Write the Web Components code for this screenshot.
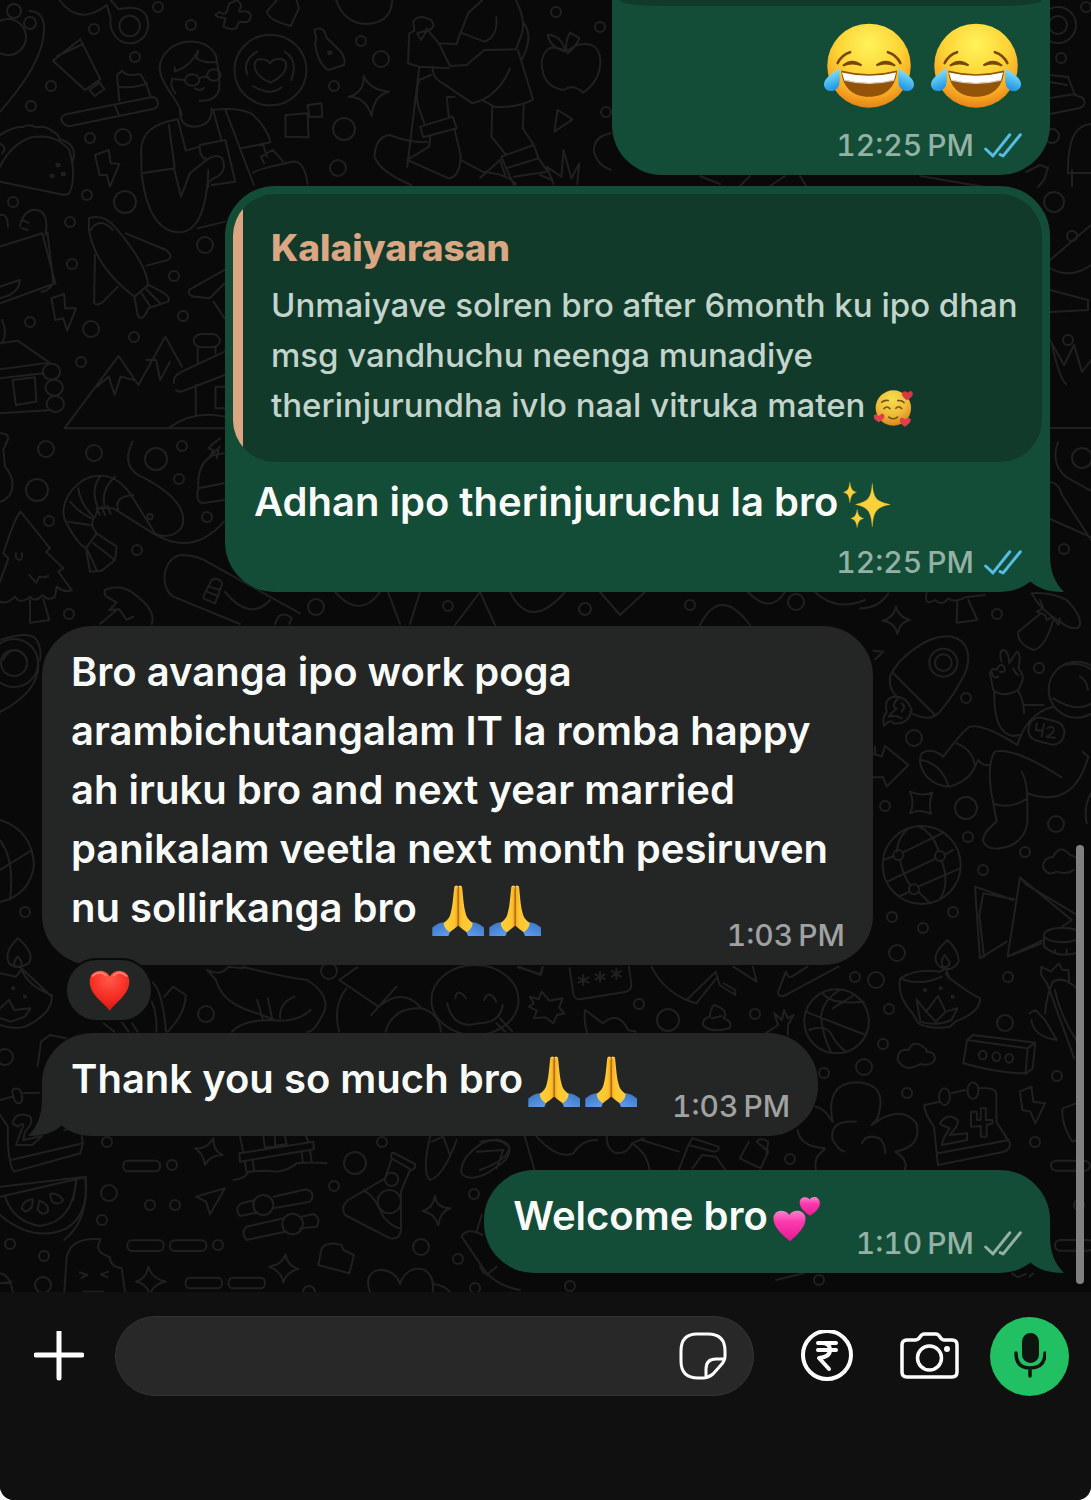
<!DOCTYPE html>
<html lang="en">
<head>
    <meta charset="utf-8">
    <meta name="viewport" content="width=device-width, initial-scale=1">
    <title>Chat</title>
    <style>
        body {
            margin: 0;
            background: #fff;
            font-family: Inter, "Liberation Sans", sans-serif;
            font-weight: 500;
        }
    </style>
</head>
<body>
    <chat-app>
        <chat-message side="out" time="12:25 PM" status="read" class="first">
            <chat-quote slot="quote" class="tail-end"></chat-quote>
            <chat-emoji name="joy" size="large"></chat-emoji><chat-emoji name="joy" size="large"></chat-emoji>
        </chat-message>
        <chat-message side="out" time="12:25 PM" status="read" tail class="close quoted">
            <chat-quote slot="quote" author="Kalaiyarasan">Unmaiyave solren bro after 6month ku ipo dhan msg vandhuchu neenga munadiye therinjurundha ivlo naal vitruka maten <chat-emoji name="loving" size="small"></chat-emoji></chat-quote>
            Adhan ipo therinjuruchu la bro<chat-emoji name="sparkles"></chat-emoji>
        </chat-message>
        <chat-message side="in" time="1:03 PM" class="long">
            Bro avanga ipo work poga arambichutangalam IT la romba happy ah iruku bro and next year married panikalam veetla next month pesiruven nu sollirkanga bro <chat-emoji name="pray"></chat-emoji><chat-emoji name="pray"></chat-emoji>
            <chat-emoji slot="reaction" name="heart"></chat-emoji>
        </chat-message>
        <chat-message side="in" time="1:03 PM" tail class="close">
            Thank you so much bro<chat-emoji name="pray"></chat-emoji><chat-emoji name="pray"></chat-emoji>
        </chat-message>
        <chat-message side="out" time="1:10 PM" status="sent" tail>
            Welcome bro<chat-emoji name="hearts"></chat-emoji>
        </chat-message>
        <chat-composer slot="composer"></chat-composer>
    </chat-app>

    <script>
        const EMOJI = {
            joy: ['😂', '33 38 282 262', `
                <defs>
                    <radialGradient id="face" cx=".5" cy=".25" r=".78"><stop offset="0" stop-color="#fff35c"/><stop offset=".5" stop-color="#fdd334"/><stop offset=".8" stop-color="#f7a523"/><stop offset="1" stop-color="#df7d10"/></radialGradient>
                    <linearGradient id="tear" x2=".3" y2="1"><stop offset="0" stop-color="#c9f3fb"/><stop offset=".5" stop-color="#62c9f3"/><stop offset="1" stop-color="#2398e8"/></linearGradient>
                </defs>
                <circle cx="174" cy="168" r="128" fill="url(#face)"/>
                <g fill="none" stroke="#7a4608" stroke-width="8" stroke-linecap="round">
                    <path d="M78 160q12-25 38-33M270 160q-12-25-38-33"/>
                    <path d="M94 168q28-24 57-1q-29-11-57 1zM197 167q29-23 57 1q-28-12-57-1z" fill="#7a4608" stroke-width="6"/>
                </g>
                <path d="M89 183Q174 205 260 183C257 232 226 263 174 263S92 232 89 183z" fill="#935409"/>
                <path d="M91 189Q174 209 257 189L251 212Q174 231 98 212z" fill="#fff"/>
                <path d="M98 212Q174 232 251 212" fill="none" stroke="#dbcdbc" stroke-width="4"/>
                <path id="drop" d="M85 174C67 188 34 205 36 227C39 250 73 253 82 228C87 208 82 190 85 174z" fill="url(#tear)"/>
                <use href="#drop" transform="matrix(-1 0 0 1 348 0)"/>`],
            loving: ['🥰', '38 42 124 118', `
                <defs><radialGradient id="love" cx=".45" cy=".25" r=".75"><stop offset="0" stop-color="#f5df4d"/><stop offset=".6" stop-color="#eebb39"/><stop offset="1" stop-color="#d9861e"/></radialGradient></defs>
                <circle cx="98" cy="101" r="55" fill="url(#love)"/>
                <g fill="none" stroke="#75501b" stroke-width="5" stroke-linecap="round"><path d="M62 83q9-8 20-5M112 78q12-2 19 6M69 103q9-10 18 0M106 102q9-10 18 1M84 129q13 11 27 0"/></g>
                <path fill="#d93843" d="M140 77Q119 62 127 51Q137 45 142 54Q153 43 158 54Q162 65 140 77z"/>
                <path fill="#e0404c" d="M53 145Q35 137 37 125Q43 117 53 126Q64 111 70 124Q73 135 53 145zM133 159Q114 146 119 134Q126 127 134 136Q146 126 152 137Q153 147 133 159z"/>`],
            sparkles: ['✨', '211 355 146 139', `
                <g fill="#fbd03a" stroke="#e9b72b" stroke-width="1">
                    <path d="M300 359C304 402 309 414 355 423C309 431 304 447 300 491C296 447 290 431 249 423C290 414 296 402 300 359z"/>
                    <path d="M232 356C235 377 239 382 252 386C239 390 235 396 232 418C229 396 226 390 212 386C226 382 229 377 232 356z"/>
                    <path d="M254 438C257 456 261 461 274 465C261 469 257 474 254 493C251 474 247 469 235 465C247 461 251 456 254 438z"/>
                </g>`],
            pray: ['🙏', '31 37 156 155', `
                <defs>
                    <linearGradient id="skin" x1="0" x2="1"><stop offset="0" stop-color="#ffcf3a"/><stop offset=".75" stop-color="#ffc52f"/><stop offset="1" stop-color="#f0a21f"/></linearGradient>
                    <linearGradient id="cuff" x2=".7" y2="1"><stop offset="0" stop-color="#3b72bd"/><stop offset="1" stop-color="#5b9bee"/></linearGradient>
                    <g id="arm">
                        <path d="M32 189V164Q48 149 67 148L88 170L80 189z" fill="url(#cuff)"/>
                        <path d="M98 42Q105 36 109 41V158C104 164 93 172 84 178Q67 167 66 150C78 142 85 132 87 121C94 96 95 65 98 42z" fill="url(#skin)"/>
                        <path d="M99 44q5-5 8 0l-1-4h-5z" fill="#fff3c4"/>
                    </g>
                </defs>
                <use href="#arm"/><use href="#arm" transform="matrix(-1 0 0 1 219 0)"/>
                <path d="M109 48V158" stroke="#a8690f" stroke-width="3"/>`],
            hearts: ['💕', '753 753 124 146', `
                <defs><linearGradient id="pink" x2="0" y2="1"><stop offset="0" stop-color="#ff83ce"/><stop offset=".35" stop-color="#fb3bae"/><stop offset="1" stop-color="#ea1896"/></linearGradient></defs>
                <path fill="url(#pink)" d="M797 897C777 876 754 853 754 823C755 796 784 792 795 813C806 791 836 797 837 823C838 853 815 876 797 897z"/>
                <path fill="url(#pink)" d="M848 816C836 805 822 793 822 774C822 754 841 752 848 764C855 751 873 755 874 774C875 791 860 806 848 816z"/>`],
            heart: ['❤️', '246 270 116 124', `
                <defs><radialGradient id="red" cx=".5" cy=".2" r=".8"><stop offset="0" stop-color="#ff5a49"/><stop offset=".5" stop-color="#f83429"/><stop offset="1" stop-color="#d91512"/></radialGradient></defs>
                <path fill="url(#red)" d="M305 393C284 365 248 345 248 304C248 268 292 262 305 290C318 262 360 268 360 304C360 345 324 365 305 393z"/>
                <path d="M256 288q18-19 38-2M316 286q18-17 36 2" stroke="#ff9388" stroke-width="6" fill="none" stroke-linecap="round" opacity=".7"/>`]
        };

        class ChatEmoji extends HTMLElement {
            connectedCallback() {
                const [glyph, box, art] = EMOJI[this.getAttribute('name')];
                this.attachShadow({ mode: 'open' }).innerHTML = `
                    <style>
                        :host {
                            display: inline-block;
                            width: 52px;
                            height: 52px;
                            margin: -8px 0 -8px 5px;
                            vertical-align: middle;
                        }

                        :host([name="sparkles"]),
                        :host([name="hearts"]) {
                            width: 48px;
                            height: 46px;
                        }

                        :host([size="small"]) {
                            width: 40px;
                            height: 38px;
                            margin-left: 0;
                        }

                        :host([size="large"]) {
                            width: 92px;
                            height: 86px;
                            margin: 0 0 0 15px;
                        }

                        :host([name="heart"]) {
                            width: 41px;
                            height: 41px;
                            margin: 0;
                        }

                        svg {
                            display: block;
                            width: 100%;
                            height: 100%;
                        }
                    </style>
                    <svg viewBox="${box}" preserveAspectRatio="none" role="img" aria-label="${glyph}">${art}</svg>
                `;
            }
        }

        class ChatQuote extends HTMLElement {
            connectedCallback() {
                const author = this.getAttribute('author');
                this.attachShadow({ mode: 'open' }).innerHTML = `
                    <style>
                        :host {
                            display: block;
                            box-sizing: border-box;
                            margin: 8px 8px 0;
                            padding: 29px 16px 32px 38px;
                            border-radius: 42px;
                            background: linear-gradient(to right, #dba683 10px, #113a2a 10px);
                            color: #c2d4cb;
                            font-size: 33px;
                            line-height: 50px;
                        }

                        /* Only the lower edge of this quote is scrolled into view */
                        :host(.tail-end) {
                            height: 6px;
                            margin-top: 0;
                            padding: 0;
                            border-radius: 0 0 42px 42px / 0 0 6px 6px;
                            background: #113a2a;
                        }

                        strong {
                            display: block;
                            margin-bottom: 7px;
                            color: #dba683;
                            font-size: 37px;
                            font-weight: 800;
                        }
                    </style>
                    ${author ? `<strong>${author}</strong>` : ''}
                    <slot></slot>
                `;
            }
        }

        class ChatMessage extends HTMLElement {
            connectedCallback() {
                const status = this.getAttribute('status');
                // iOS puts a narrow no-break space before AM and PM
                const time = this.getAttribute('time').replace(' ', '\u202f');
                this.attachShadow({ mode: 'open' }).innerHTML = `
                    <style>
                        :host {
                            --bubble: #242626;
                            --meta: #a0a2a1;
                            display: flex;
                            flex-direction: column;
                            align-items: flex-start;
                            margin-top: 34px;
                        }

                        :host([side="out"]) {
                            --bubble: #144d37;
                            --meta: #93b1a4;
                            align-items: flex-end;
                        }

                        :host(.close) {
                            margin-top: 11px;
                        }

                        :host(.first) {
                            margin-top: 0;
                        }

                        .bubble {
                            position: relative;
                            box-sizing: border-box;
                            max-width: min(831px, 100%);
                            border-radius: 50px;
                            background: var(--bubble);
                            color: #fafcfb;
                        }

                        :host(.first) .bubble {
                            min-width: 438px;
                            border-radius: 0 0 50px 50px;
                        }

                        :host(.quoted) .bubble {
                            max-width: min(825px, 100%);
                        }

                        .content {
                            display: flex;
                            align-items: flex-end;
                            gap: 35px;
                            padding: 16px 28px 12px 29px;
                        }

                        .text {
                            margin-bottom: 16px;
                            font-size: 40px;
                            font-weight: 600;
                            line-height: 59px;
                        }

                        .meta {
                            display: flex;
                            align-items: center;
                            gap: 10px;
                            color: var(--meta);
                            font-size: 30px;
                            font-variant-numeric: tabular-nums;
                            line-height: 36px;
                            white-space: nowrap;
                        }

                        :host(.first) .content,
                        :host(.quoted) .content {
                            flex-direction: column;
                            gap: 0;
                            padding-top: 10px;
                        }

                        :host(.quoted) .text {
                            align-self: flex-start;
                            margin-bottom: 13px;
                        }

                        :host(.first) .text {
                            display: flex;
                            margin: 7px 0 18px;
                        }

                        /* The time shares the last line of a wrapped text */
                        :host(.long) .content {
                            display: grid;
                        }

                        :host(.long) .text,
                        :host(.long) .meta {
                            grid-area: 1 / 1;
                        }

                        :host(.long) .meta {
                            place-self: end;
                        }

                        .ticks {
                            width: 38px;
                            height: 25px;
                            fill: none;
                            stroke: currentColor;
                            stroke-width: 9;
                            stroke-linecap: round;
                            stroke-linejoin: round;
                        }

                        .ticks.read {
                            color: #53bde3;
                        }

                        .tail {
                            position: absolute;
                            right: -14px;
                            bottom: 0;
                            width: 44px;
                            height: 52px;
                            fill: var(--bubble);
                        }

                        :host([side="in"]) .tail {
                            right: auto;
                            left: -14px;
                            transform: scaleX(-1);
                        }

                        .reaction {
                            position: relative;
                            display: flex;
                            align-items: center;
                            justify-content: center;
                            width: 84px;
                            height: 60px;
                            margin: -7px 0 0 23px;
                            border: 2px solid #090a0a;
                            border-radius: 32px;
                            background: #242626;
                        }

                        .reaction[hidden] {
                            display: none;
                        }
                    </style>
                    <div class="bubble">
                        <slot name="quote"></slot>
                        <div class="content">
                            <div class="text"><slot></slot></div>
                            <div class="meta">
                                <time>${time}</time>
                                ${status ? `<svg class="ticks ${status}" viewBox="611 564 115 75" role="img" aria-label="${status}"><path d="M616 612l22 21 51-64M660 629l9 4 52-64"/></svg>` : ''}
                            </div>
                        </div>
                        ${this.hasAttribute('tail') ? '<svg class="tail" viewBox="0 0 44 52" aria-hidden="true"><path d="M30 0V15C30 32 35 43 44 52C30 52 19 49 11 42L0 15z"/></svg>' : ''}
                    </div>
                    <div class="reaction" ${this.querySelector('[slot="reaction"]') ? '' : 'hidden'}><slot name="reaction"></slot></div>
                `;
            }
        }

        // Loose dots between the doodles: x, y, radius
        const DOTS = [
            [158, 7, 5], [94, 29, 5], [191, 25, 5], [135, 57, 5], [51, 86, 5], [31, 106, 5], [90, 138, 5], [123, 137, 8],
            [361, 41, 5], [381, 59, 8], [334, 86, 5], [344, 129, 11], [338, 168, 8], [13, 202, 5], [87, 195, 5], [125, 202, 11],
            [70, 222, 5], [205, 245, 8], [72, 264, 5], [174, 276, 5], [183, 316, 5], [30, 322, 5], [91, 329, 8], [134, 337, 5],
            [81, 362, 5], [556, 12, 5], [600, 27, 5], [46, 449, 8], [94, 453, 8], [182, 446, 5], [156, 459, 11], [14, 11, 7],
            [30, 23, 6], [8, 37, 18], [606, 112, 5], [37, 490, 11], [49, 521, 5], [179, 479, 5], [207, 517, 5], [137, 550, 5],
            [69, 614, 5], [997, 614, 5], [1039, 668, 5], [966, 698, 5], [914, 738, 8], [885, 806, 5], [966, 808, 11], [968, 837, 5],
            [1056, 824, 8], [1025, 852, 5], [983, 870, 5], [953, 912, 5], [892, 917, 5], [923, 928, 5], [897, 953, 8], [876, 980, 8],
            [1008, 977, 5], [25, 912, 5], [206, 1014, 8], [329, 971, 8], [107, 1142, 5], [382, 1142, 5], [355, 1163, 11], [172, 1165, 5],
            [109, 1193, 8], [150, 1205, 5], [175, 1205, 5], [102, 1220, 5], [10, 1244, 5], [44, 1256, 5], [43, 1285, 8], [334, 1186, 5],
            [474, 1194, 5], [421, 1247, 8], [458, 1259, 5], [475, 1288, 5], [218, 1245, 5], [309, 1292, 6], [639, 1004, 5], [668, 1020, 11],
            [755, 1014, 5], [1005, 1023, 8], [889, 1009, 5], [855, 977, 5], [883, 1044, 5], [864, 1067, 8], [824, 1073, 5],
            [907, 1093, 5], [1057, 1076, 5], [1035, 1142, 5], [790, 1159, 5], [1079, 1205, 5], [1061, 58, 5], [1086, 7, 5], [1052, 136, 7],
            [1054, 202, 10], [1072, 236, 5], [1068, 340, 5], [1082, 458, 10], [1064, 549, 5], [796, 602, 8], [316, 607, 8], [448, 606, 5], [585, 609, 6],
            [690, 605, 5], [5, 1057, 8], [570, 1286, 5], [819, 1280, 5]
        ];

        class ChatWallpaper extends HTMLElement {
            connectedCallback() {
                const dots = DOTS.map(([x, y, r]) => `<circle cx="${x}" cy="${y}" r="${r}"/>`).join('');
                this.attachShadow({ mode: 'open' }).innerHTML = `
                    <style>
                        :host {
                            position: absolute;
                            inset: 0;
                            overflow: hidden;
                            background: #090909;
                        }

                        svg {
                            display: block;
                            width: 100%;
                            height: 100%;
                            fill: none;
                            stroke: #202020;
                            stroke-width: 2;
                            stroke-linecap: round;
                            stroke-linejoin: round;
                        }

                        path,
                        circle,
                        ellipse,
                        rect {
                            vector-effect: non-scaling-stroke;
                        }
                    </style>
                    <svg viewBox="0 0 1091 1292" preserveAspectRatio="xMinYMin slice" aria-hidden="true">
                        ${dots}
                        <!-- Toothpaste, reader, coffee, hiker, taco, plane, cabin, mountains -->
                        <g transform="scale(.3954 .3333)">
                            <path d="M75 33Q115 35 111 95Q108 190 0 335M150 0Q200 80 270 15L280 55C275 90 295 128 325 130C360 130 378 98 374 65C370 20 330 18 300 28L280 0"/>
                            <ellipse cx="328" cy="78" rx="26" ry="31"/>
                            <path d="M203 118L134 182L215 270L254 238zM145 168L210 132M226 270L252 248L264 267L240 288z"/>
                            <path d="M170 342L385 291Q402 294 399 316Q398 323 386 327L175 379Q157 374 155 357Q156 346 170 342M290 315L300 343M302 302L296 225L309 212Q320 232 355 222Q375 260 380 290M300 260Q338 266 372 250"/>
                            <path d="M460 345C460 310 405 255 404 205C405 160 440 122 490 125C530 128 548 160 549 185Q520 192 497 175Q500 160 501 152Q485 197 442 215V202M549 185Q557 240 554 270Q545 305 505 302M436 235Q428 260 444 280M455 330Q454 380 492 380Q538 376 535 325M442 238L468 240M505 235Q515 228 525 232"/>
                            <ellipse cx="486" cy="240" rx="18" ry="17"/><ellipse cx="541" cy="225" rx="17" ry="17"/><path d="M493 265Q505 275 516 264"/>
                            <path d="M450 358Q355 375 357 455L358 520Q375 690 450 697Q520 700 527 510M427 375L442 505L359 520M450 360L470 452L505 440M505 435L570 420L595 545L535 555M505 440Q505 475 525 478Q545 460 562 475Q575 510 550 530Q520 545 527 560M525 478L480 520L458 590L440 505M540 335L560 420M570 330L642 555M535 330Q600 320 635 340Q675 380 684 427L610 445M665 432L675 470M640 520Q640 510 740 485Q770 482 778 552M500 685L570 665M668 490L660 470L690 450L716 484"/>
                            <ellipse cx="684" cy="210" rx="91" ry="106"/><path d="M684 248Q640 225 644 190Q650 170 676 182L683 190L690 180Q720 170 724 192Q724 225 684 248M625 222Q613 180 650 155M720 155Q755 180 737 240M640 258Q685 290 712 262"/>
                            <path d="M545 45L555 35Q570 50 575 30L580 10L600 0L610 15L605 35Q630 30 634 45Q635 60 625 66L605 65L597 85Q580 90 565 80L570 55L550 50zM700 0L675 35Q678 60 735 78L756 25L750 0M850 0Q870 70 925 72Q990 70 992 0"/>
                            <path d="M800 115L795 90Q820 75 825 112L862 155Q876 180 870 195L830 210Q803 190 797 130zM920 228Q935 270 984 275Q945 285 940 348Q925 290 882 290Q920 280 920 228M722 345L778 340L780 412L722 410zM778 315L813 310L815 350L782 350z"/>
                            <circle cx="834" cy="158" r="4"/>
                            <path d="M1220 0L1185 38L1165 98L1225 125Q1260 110 1255 50M1305 0Q1330 60 1320 100L1305 148L1225 150M1165 95L1155 132L1110 130L1078 85M1110 130L1138 198L1180 195L1225 150M1035 100L1048 92L1045 65Q1060 40 1090 60Q1105 80 1085 90L1055 100L1065 120L1080 90M1035 100L1032 190L1060 200L1135 205M1095 200Q1090 230 1120 250L1195 310Q1260 290 1290 205M1310 150L1348 298Q1310 325 1250 320L1222 302M1325 70Q1350 110 1320 178M1060 205L1030 500M1060 240Q1050 280 1058 320L1073 370M1090 225L1060 240M1150 290L1130 292L1135 350M1063 380L1145 350L1155 385L1070 412zM1150 390L1165 465Q1165 530 1135 535L1030 480L1085 440L1088 412M1080 425Q1040 430 985 405Q950 410 947 470Q960 515 1040 555M1245 320L1243 410L1280 465M1325 315L1322 385L1350 435M1268 470L1350 435L1362 475L1280 505zM1280 505L1300 555M1362 475L1385 515L1300 530M1165 480L1220 515Q1280 520 1305 552M1400 552L1382 500L1420 530L1425 450L1445 535L1465 490L1460 552"/>
                            <path d="M1430 155Q1380 120 1370 185Q1370 260 1425 270Q1450 250 1475 278Q1520 240 1518 180Q1515 120 1460 135zM1430 155Q1420 105 1385 105Q1390 140 1430 155M1432 150Q1430 120 1442 98L1466 115Q1450 150 1435 160M1410 330L1448 358L1402 395zM1545 400Q1500 410 1502 455Q1510 495 1545 510"/>
                            <path d="M0 500Q30 430 80 412Q140 400 175 450Q195 530 175 580Q165 588 150 582L0 545M0 405Q30 380 60 380Q75 370 90 382Q115 375 135 395Q150 405 150 418Q190 430 187 470L182 490M0 430Q20 445 5 460M240 465L275 450L280 490L302 492L278 560L270 525L252 525z"/>
                            <circle cx="147" cy="495" r="4"/><circle cx="132" cy="528" r="4"/><circle cx="160" cy="522" r="4"/>
                            <path d="M0 740L107 700L140 850L0 910M120 698L135 850Q120 875 105 875M0 645Q20 640 20 680M50 680Q60 625 95 630Q125 640 115 705M55 660L72 668M55 685L70 690M0 860L50 840Q50 880 0 895"/>
                            <path d="M225 655Q260 640 290 680Q370 790 375 855L340 890Q240 800 225 690zM230 690Q240 665 262 670Q280 680 285 690M318 700L420 750Q440 770 425 780L370 797M240 765L238 910Q245 918 258 908L298 860M340 890L348 945Q360 970 375 925L425 905Q435 890 400 870L375 855M358 880L380 920M370 868L405 910"/>
                            <path d="M130 895L162 882L165 925L192 925L170 992L160 955L140 960zM0 1030L45 1022L125 1088L0 1108M5 1030Q20 1000 5 960M0 1135L110 1120M0 1240L130 1230M32 1140L88 1132L92 1205L40 1215z"/>
                            <ellipse cx="130" cy="1115" rx="22" ry="24"/><ellipse cx="137" cy="1163" rx="22" ry="24"/><ellipse cx="140" cy="1212" rx="22" ry="24"/>
                            <path d="M163 1285L300 1068L350 1155L418 1010L460 1100M245 1160L275 1130L290 1185L305 1130L340 1140M370 1080L395 1080L405 1140L430 1085M163 1285H568M428 1283Q490 1230 568 1250M440 1150Q435 1130 460 1115L568 1055M445 1170Q455 1180 470 1170L568 1125M495 1155V1245M500 1045V1090M545 1042V1060M568 1160H545V1225H568M568 810L478 870Q475 890 495 890L530 895L568 850M540 905L568 955"/>
                            <rect x="490" y="1002" width="66" height="40" rx="20"/>
                        </g>
                        <!-- Shrimp, tree, bobble hat, mushroom, snowboard -->
                        <g transform="translate(0 400) scale(.3333)">
                            <path d="M398 125C370 180 385 215 435 235C500 270 550 310 550 360C550 400 500 420 465 400L390 280C350 225 300 215 250 240C190 280 180 340 200 370Q230 430 258 445L270 515L305 512L345 480L350 440L290 400Q265 370 285 350L295 325H340L465 403M235 265Q240 310 280 350M210 305Q240 340 275 355M300 230Q270 270 295 325M345 230Q300 270 315 325M400 285Q340 290 355 330M205 365L270 375M258 445L290 400M262 450L290 510M280 430L345 480M465 403Q580 470 672 365M290 325L300 345M305 320L315 345M322 318L332 342"/>
                            <circle cx="450" cy="350" r="8"/>
                            <path d="M62 335Q45 350 10 460L25 475L0 545M62 335L150 445L138 455L190 505L175 515L215 570Q195 580 170 560L165 590Q145 605 128 585Q105 610 90 590Q60 615 45 590Q20 615 0 605M48 460Q45 480 60 480Q70 475 65 460M88 525L108 548L118 530Q130 535 145 528M90 600V668L148 660L130 598M0 100Q25 100 25 115L10 150L15 200Q50 240 30 285Q10 305 0 305"/>
                            <path d="M595 265Q590 190 640 165L672 160M595 265L672 250M595 265Q585 300 605 310L672 300M630 170L640 150L625 145L640 130L660 115M650 175L655 150M640 160L660 140"/>
                            <path d="M315 570Q360 550 400 580Q470 630 455 672M315 570Q310 580 320 590L350 608L328 630L358 628L380 660L400 650M300 672L350 630M720 672L520 590C475 560 490 470 545 465Q590 465 630 490L900 640M610 590L635 540Q655 530 667 550L645 610L610 595zM620 575L655 588M628 560L660 570M825 672L835 650Q855 635 875 655L868 672M0 720Q90 690 110 720Q125 745 120 780M10 780Q30 740 60 755Q80 770 80 780"/>
                        </g>
                        <!-- Rocket, astronaut, globe, book -->
                        <g transform="translate(860 590) scale(.3333)">
                            <path d="M0 55Q55 55 85 10M200 10Q190 50 225 30Q245 50 265 25Q280 40 315 22L375 15M292 35L290 98L352 90L325 30M108 50Q115 80 150 90Q120 95 112 132Q105 95 67 92Q100 85 108 50M40 182L70 185L45 208"/>
                            <path d="M515 10Q570 5 620 30Q670 80 658 110Q640 125 600 95Q540 60 515 10M540 30L550 55L530 65L555 75L560 90L580 80L595 105L600 85M540 72L475 125Q470 160 520 180Q555 175 580 90"/>
                            <path d="M90 260C110 210 200 130 275 140C325 150 335 200 315 250Q280 320 235 370Q215 390 180 380Q160 375 150 365M90 260Q85 295 110 320M100 250L225 375"/><circle cx="250" cy="218" r="42"/><circle cx="250" cy="218" r="25"/>
                            <path d="M110 320Q70 320 80 365Q65 385 72 408Q90 385 100 400Q145 405 155 360Q140 320 110 320M115 325Q90 350 110 355L85 380Q110 375 125 385M125 340Q140 350 125 365"/>
                            <path d="M425 215Q415 185 430 180Q445 180 448 220L470 185Q485 190 475 235Q490 250 488 270L475 300Q430 325 400 300L390 250Q395 230 410 240M410 240Q420 215 432 230Q440 250 420 245M395 245Q400 270 415 260M460 235Q465 250 475 255M403 305Q400 430 460 438L480 435M473 300Q492 330 492 370M492 345H550M580 350Q500 370 472 465Q370 400 330 410Q310 420 250 500Q215 470 185 490Q170 520 200 560Q230 590 270 590Q330 570 345 530L355 510Q370 530 390 525M290 460Q340 480 345 530M185 510Q240 520 265 585M605 562Q460 470 405 485C380 520 390 600 400 640L410 695Q365 730 370 755Q380 780 420 775Q490 765 502 700V620Q500 570 485 545M400 640Q450 660 502 625M502 610Q640 660 685 500L668 485"/>
                            <circle cx="650" cy="299" r="84"/><path d="M580 325Q650 370 693 340M660 260Q680 270 684 300M610 225Q670 215 693 240"/><rect x="505" y="388" width="108" height="70" rx="32" transform="rotate(15 558 424)"/>
                            <path d="M530 400L528 420L548 423M552 403L545 440M562 415Q580 405 582 420Q580 430 560 440L585 443M40 490L65 500L75 468L145 525L80 590L70 562H40M45 470V495M150 605Q185 620 217 608Q205 640 213 672Q180 655 150 670Q165 640 150 605"/>
                            <circle cx="185" cy="825" r="117"/><circle cx="115" cy="795" r="15"/><circle cx="240" cy="798" r="15"/><circle cx="162" cy="898" r="15"/>
                            <path d="M70 810L102 798M128 788L250 728M82 875L228 805M253 795L280 780M110 785Q115 740 145 715M120 810Q130 860 152 887M175 708Q220 730 236 783M245 812Q270 880 240 928M175 890L300 835M150 905L120 918M175 905L210 940"/>
                            <path d="M550 835Q545 805 580 800Q600 760 630 795Q655 800 650 815M550 835Q565 860 590 845Q620 855 640 840M360 1105L345 890L460 930M370 910L462 928M370 910L358 975L372 1100M360 1105L440 1055M480 862L443 1100L545 1060M480 862L635 990L600 1015M480 862L500 885L660 980M443 1100L550 1050"/>
                            <ellipse cx="607" cy="1035" rx="55" ry="22"/><path d="M552 1035V1070Q600 1110 660 1085M585 1080V1088M620 1078V1088M693 610Q670 650 680 700"/>
                        </g>
                        <!-- Sandals, bear, smiley, skate, lab flask, sliders -->
                        <g transform="translate(0 880) scale(.3571 .3333)">
                            <path d="M50 175Q10 215 25 250Q50 270 80 250Q100 220 50 175M50 230Q35 245 42 260L58 262Q65 245 50 230M0 280L45 290L60 268Q80 320 145 345Q150 400 70 440Q40 450 0 435M60 265L145 350M0 385L25 360L40 390L85 385L70 410L30 425L0 415"/>
                            <circle cx="37" cy="325" r="3"/><circle cx="70" cy="350" r="3"/>
                            <path d="M425 305Q455 330 465 455M425 365Q440 400 438 455M460 350L485 320L520 345Q520 400 470 455M290 430L320 455M340 425L360 455M370 430L385 455M580 270Q620 290 640 260L680 265M580 270L605 300Q620 370 720 400L770 420M680 260Q790 290 860 300Q920 340 910 390Q880 460 860 455M650 455Q680 420 760 420Q830 430 870 390M720 360L735 415M750 355L762 415M785 415Q780 370 825 350M1000 262L950 300L1060 380L1110 320M1060 380L1040 405M1060 380Q1130 320 1180 385M950 455Q930 380 970 325M1080 455Q1100 380 1180 385Q1230 400 1235 455"/>
                            <ellipse cx="1330" cy="360" rx="122" ry="105"/><path d="M1275 355Q1280 320 1305 355M1355 360Q1370 325 1390 365M1252 370Q1270 450 1340 430Q1400 430 1408 375M1390 430L1415 455M1400 415L1435 455M1450 262L1515 283L1520 262"/>
                            <path d="M105 560L115 485L140 465L185 475M0 660L35 650M65 640L110 638M35 635Q35 620 55 628Q70 660 55 670Q40 672 35 640M0 705L22 740Q20 850 40 875L225 820L232 790L225 740L180 750M30 840L232 790M35 730Q45 690 85 710Q95 730 70 755L65 780L118 768L90 795L45 795L60 750Q75 720 50 740zM0 920L240 890Q250 1020 180 1080M215 895L205 960"/>
                        </g>
                        <g transform="translate(0 1120) scale(.3333)">
                            <path d="M0 230L255 172Q270 280 200 325Q100 370 0 285M15 230Q40 305 120 318Q220 305 228 180M65 265Q70 240 98 238Q100 270 75 275zM118 242Q150 255 143 275Q125 290 113 268zM150 222Q170 215 190 240Q175 260 155 243zM0 460Q30 465 38 515M0 490L35 485"/>
                            <rect x="370" y="122" width="110" height="32" rx="14"/><rect x="382" y="361" width="109" height="32" rx="14"/><rect x="510" y="361" width="109" height="32" rx="14"/><rect x="557" y="473" width="109" height="32" rx="14"/><rect x="686" y="473" width="109" height="32" rx="14"/>
                            <path d="M193 515L200 410Q215 350 302 358Q285 385 305 400L330 412Q330 440 365 445L375 515M240 457L262 465L245 474M325 455L303 463L323 472M250 515H310M445 440Q455 475 497 485Q460 490 450 525Q440 490 408 485Q440 475 445 440M857 403Q860 435 895 447Q860 455 850 488Q845 455 808 440Q845 435 857 403M585 85Q620 90 640 55Q640 95 668 105Q630 105 615 135Q610 100 585 85M588 230L675 205L630 283L618 245zM1305 228Q1310 265 1352 265Q1320 275 1315 315Q1305 280 1268 273Q1300 265 1305 228"/>
                            <path d="M720 48L730 98M718 100L940 65L942 88L720 125zM735 125L740 160M758 120L763 155M905 95L908 125M930 90L935 125M790 50L795 83L860 72L855 48M825 50V78M700 180Q740 175 745 155Q800 150 830 155Q870 150 890 130Q930 125 980 130M918 48L925 65"/>
                            <path d="M765 240L730 248Q700 260 720 288L770 278M820 230L920 208Q950 220 930 245L820 265M850 295L740 320Q720 340 740 360L855 335M905 290L940 282Q965 295 950 320L900 325"/><circle cx="790" cy="255" r="30"/><circle cx="878" cy="312" r="31"/>
                            <path d="M1180 98L1245 132Q1250 145 1235 150L1175 115Q1170 100 1180 98M1175 118L1155 175L1045 240Q1020 260 1035 285L1170 355Q1200 360 1203 330V215L1230 150M1090 212Q1120 220 1150 290Q1180 325 1203 325"/><circle cx="1175" cy="178" r="20"/><circle cx="1168" cy="245" r="35"/>
                            <path d="M1290 50Q1265 160 1290 180Q1330 170 1370 60M1295 65L1330 50L1350 105M1400 110C1450 50 1500 50 1525 75Q1540 110 1490 140C1440 180 1400 180 1385 160Q1380 140 1400 110M1430 95L1510 90L1490 145M975 375L1000 370L1025 375L1030 390L1062 405L1048 460L955 435L965 385zM1110 515C1080 435 1180 430 1200 492C1220 425 1310 430 1298 515M1300 492Q1330 495 1350 515M1445 285L1430 335M1448 345Q1400 320 1385 350L1460 460Q1500 500 1560 510M1460 465L1490 440"/>
                        </g>
                        <!-- Diya, basketball, calendar, clover, shoebox -->
                        <g transform="translate(480 940) scale(.3897 .3333)">
                            <path d="M230 85L240 165Q245 180 260 177L375 155Q390 150 388 130L382 80M265 105V135M253 113L278 128M278 113L253 128M308 95V125M296 103L320 117M320 103L296 118M350 85V118M338 93L362 110M362 93L338 110M100 80L155 105L160 80M440 80Q470 150 530 180L605 95M530 180L555 190L610 110M605 95L615 135L655 165V150L625 130M650 80L710 125L700 80M785 95L765 155Q765 175 785 165L920 80M785 95Q790 115 800 110L840 80M600 195Q640 210 625 235Q650 245 640 265Q590 280 572 255Q570 235 590 230Q590 210 600 195M595 235L620 228M128 170L150 178L158 155L178 182L212 175L203 202L217 220L198 225L188 250L168 232L138 235L146 212L125 200L138 190zM275 278Q265 240 270 210L315 250Q355 210 380 270L400 275M735 278L765 255L755 220L775 240L780 210L790 235L805 225L790 255V285"/>
                            <ellipse cx="915" cy="244" rx="83" ry="96"/><path d="M880 160Q900 195 985 185M925 148Q880 180 875 230Q880 290 900 335M835 215L990 285M845 270Q890 250 905 290Q920 320 940 335M905 205L960 165"/>
                            <path d="M1200 0Q1150 50 1180 80Q1210 100 1228 65Q1230 35 1200 0M1192 45Q1180 65 1188 80Q1205 85 1205 65zM1180 95L1195 85L1205 115Q1255 160 1283 175Q1285 215 1220 245L1205 260Q1160 270 1125 250L1110 220Q1070 170 1078 115Q1120 85 1180 95M1078 115Q1130 140 1185 110M1205 115L1195 100M1120 178L1145 215L1175 168L1195 215L1225 205L1210 240Q1170 260 1130 245zM1145 215L1170 245L1195 215"/>
                            <circle cx="1142" cy="150" r="3"/><circle cx="1182" cy="145" r="3"/><circle cx="1213" cy="170" r="3"/>
                            <path d="M1072 360Q1070 325 1100 330Q1110 300 1135 318Q1150 330 1145 335Q1170 335 1167 360Q1155 380 1130 372Q1090 400 1072 360M1250 300L1405 325L1400 400Q1330 400 1240 370zM1250 300L1265 285L1425 308L1405 325M1425 308L1418 385L1400 402"/>
                            <ellipse cx="1290" cy="345" rx="10" ry="13"/><ellipse cx="1325" cy="350" rx="10" ry="13"/><ellipse cx="1358" cy="355" rx="10" ry="13"/>
                            <path d="M1440 105V80L1465 95L1485 70L1495 90H1510L1512 130M1440 105L1455 130L1525 355M1470 125Q1455 160 1450 220M1410 220L1425 210L1450 240L1480 300Q1420 290 1415 240M1475 150Q1490 230 1530 300M1470 125Q1500 105 1535 150"/>
                            <path d="M905 545Q885 430 965 427Q1050 430 1020 535L1005 555Q1080 490 1120 550Q1135 620 1065 635Q1100 660 1090 690M905 545Q880 500 860 500M965 545Q895 540 905 600Q920 630 935 635M885 625Q820 620 815 570M885 628Q855 650 862 690M980 610Q990 580 1025 595Q1040 610 1040 640"/>
                            <path d="M1180 485L1140 495Q1140 520 1165 560L1175 675L1345 635Q1360 630 1360 610L1325 545V460Q1320 440 1280 445M1210 460L1245 450M1175 640L1358 600"/><ellipse cx="1192" cy="470" rx="14" ry="25"/><ellipse cx="1265" cy="452" rx="14" ry="25"/>
                            <path d="M1180 550Q1200 515 1225 540Q1230 555 1205 585L1250 580V600L1185 615Q1190 590 1205 565L1185 555zM1260 515V560L1285 558V590H1300V555L1315 550V540H1298V505H1285V540H1275V515zM1385 455L1415 440L1420 485L1450 490L1425 550L1412 515L1392 510zM1530 490L1495 505Q1490 550 1520 605L1530 600"/>
                            <rect x="1465" y="662" width="100" height="30" rx="15"/><rect x="1475" y="900" width="100" height="32" rx="15"/>
                            <path d="M115 590L140 690M145 590Q200 660 240 640Q260 600 300 600M325 590Q325 630 350 640Q380 640 390 610L420 595M390 610Q430 640 435 690M415 600L510 635M545 595L612 620Q615 635 600 635L535 615zM535 615L510 690M545 685L570 645L605 650L630 690M690 605L667 655L720 685L740 635L710 605Q720 590 740 605L735 640M0 605Q60 590 75 625Q70 660 0 690M0 20L10 50"/>
                            <path d="M10 1000L0 980M760 1020L830 1000M1365 1000L1380 1012L1400 1002M1420 1000L1410 1010"/>
                        </g>
                        <!-- Right margin and the strip below the second message -->
                        <g>
                            <circle cx="1058" cy="25" r="18"/><circle cx="1058" cy="25" r="9"/>
                            <path d="M1050 75L1068 77L1075 95L1083 98Q1087 105 1080 108L1050 114M1050 82L1067 85M1050 98L1075 94M1068 173Q1067 125 1091 124M1068 173H1091M1072 170V186M1026 172L1040 165L1048 168L1044 180L1038 187M1050 260L1091 225M1050 268Q1070 280 1091 265M1050 290L1088 300V310L1050 312M1050 340L1064 365L1074 345L1082 372L1091 360M1050 428H1091M1058 442Q1050 463 1066 477L1091 491M1050 482Q1059 483 1062 495L1091 540M1050 519L1091 537M1052 345Q1060 380 1066 384"/>
                            <path d="M225 592Q250 622 270 600M335 592Q360 620 380 592M388 592L400 624M420 592L410 624M455 625L480 592L495 625M510 592Q530 632 565 592M600 592L620 615L645 592M700 625Q720 585 750 625M748 592Q770 615 785 592M815 592Q835 612 865 600M480 178L500 160L505 175M540 175L552 180M700 176L720 184M740 186L750 176M770 186L785 176M800 176L806 186M920 176L985 187"/>
                            <circle cx="14" cy="663" r="24"/><circle cx="14" cy="663" r="13"/><path d="M38 660Q42 690 0 712M0 820Q32 830 34 865Q30 895 0 902M0 840Q15 860 10 900M0 870L32 850"/>
                        </g>
                    </svg>
                `;
            }
        }

        class ChatComposer extends HTMLElement {
            connectedCallback() {
                this.attachShadow({ mode: 'open' }).innerHTML = `
                    <style>
                        :host {
                            display: block;
                            box-sizing: border-box;
                            min-height: 208px;
                            padding: 24px 22px 0 34px;
                            background: #101010;
                        }

                        form {
                            display: flex;
                            align-items: center;
                            gap: 31px;
                        }

                        button {
                            flex: none;
                            display: flex;
                            align-items: center;
                            justify-content: center;
                            height: 79px;
                            padding: 0;
                            border: 0;
                            background: none;
                            color: #fff;
                            cursor: pointer;
                        }

                        svg {
                            fill: none;
                            stroke: currentColor;
                            stroke-width: 4;
                            stroke-linecap: round;
                            stroke-linejoin: round;
                        }

                        .field {
                            flex: 1;
                            display: flex;
                            align-items: center;
                            box-sizing: border-box;
                            min-width: 0;
                            height: 80px;
                            padding: 0 26px 0 36px;
                            border: 1px solid #343434;
                            border-radius: 40px;
                            background: #282828;
                        }

                        input {
                            flex: 1;
                            min-width: 0;
                            border: 0;
                            outline: 0;
                            background: none;
                            color: #fff;
                            font: inherit;
                            font-size: 40px;
                        }

                        .pay {
                            margin: 0 16px;
                        }

                        .mic {
                            width: 79px;
                            border-radius: 50%;
                            background: #20c063;
                            color: #0e1511;
                        }
                    </style>
                    <form>
                        <button type="button" aria-label="Attach">
                            <svg width="50" height="50" viewBox="0 0 50 50"><path d="M2 24h46M25 1v46" stroke-width="5"/></svg>
                        </button>
                        <div class="field">
                            <input type="text" aria-label="Message">
                            <button type="button" aria-label="Stickers">
                                <svg width="48" height="48" viewBox="0 0 48 48"><path d="M18 2H29Q46 2 46 19V24Q46 29 42 33L34 42Q29 46 24 46H19Q2 46 2 29V19Q2 2 18 2zM27 45V37Q27 27 37 27H45" stroke-width="3"/></svg>
                            </button>
                        </div>
                        <button type="button" class="pay" aria-label="Payment">
                            <svg width="52" height="52" viewBox="0 0 52 52"><circle cx="26" cy="25" r="24"/><path d="M17 13H35M17 20H35M17 13H21Q29 13 29 20Q29 27 18 28L28 39" stroke-width="4"/></svg>
                        </button>
                        <button type="button" aria-label="Camera">
                            <svg width="59" height="48" viewBox="0 0 59 48"><path d="M7 8H15Q18 8 20 5Q22 2 24 2H36Q38 2 40 5Q42 8 44 8H52Q57 8 57 13V40Q57 45 52 45H7Q2 45 2 40V13Q2 8 7 8z" stroke-width="3.500"/><circle cx="29.500" cy="26" r="12" stroke-width="3.500"/><circle cx="47" cy="17" r="3" fill="currentColor" stroke="none"/></svg>
                        </button>
                        <button type="button" class="mic" aria-label="Record voice message">
                            <svg width="32" height="48" viewBox="0 0 32 48"><rect x="9" y="2" width="15" height="28" rx="7.500" fill="currentColor" stroke-width="2"/><path d="M2 21Q2 36 16 36Q31 36 31 21M16 37V44" stroke-width="3.500"/></svg>
                        </button>
                    </form>
                `;
            }
        }

        class ChatApp extends HTMLElement {
            connectedCallback() {
                this.attachShadow({ mode: 'open' }).innerHTML = `
                    <style>
                        :host {
                            display: flex;
                            flex-direction: column;
                            min-height: 100vh;
                            border-radius: 0 0 14px 14px;
                            overflow: hidden;
                            background: #101010;
                        }

                        main {
                            position: relative;
                            flex: 1;
                            padding: 0 41px 16px 42px;
                        }

                        .messages {
                            position: relative;
                        }

                        .scrollbar {
                            position: absolute;
                            right: 7px;
                            bottom: 8px;
                            width: 8px;
                            height: 34%;
                            border-radius: 4px;
                            background: #808080;
                        }
                    </style>
                    <main>
                        <chat-wallpaper></chat-wallpaper>
                        <div class="messages"><slot></slot></div>
                        <div class="scrollbar"></div>
                    </main>
                    <slot name="composer"></slot>
                `;
            }
        }

        customElements.define('chat-emoji', ChatEmoji);
        customElements.define('chat-quote', ChatQuote);
        customElements.define('chat-message', ChatMessage);
        customElements.define('chat-wallpaper', ChatWallpaper);
        customElements.define('chat-composer', ChatComposer);
        customElements.define('chat-app', ChatApp);
    </script>
</body>
</html>
